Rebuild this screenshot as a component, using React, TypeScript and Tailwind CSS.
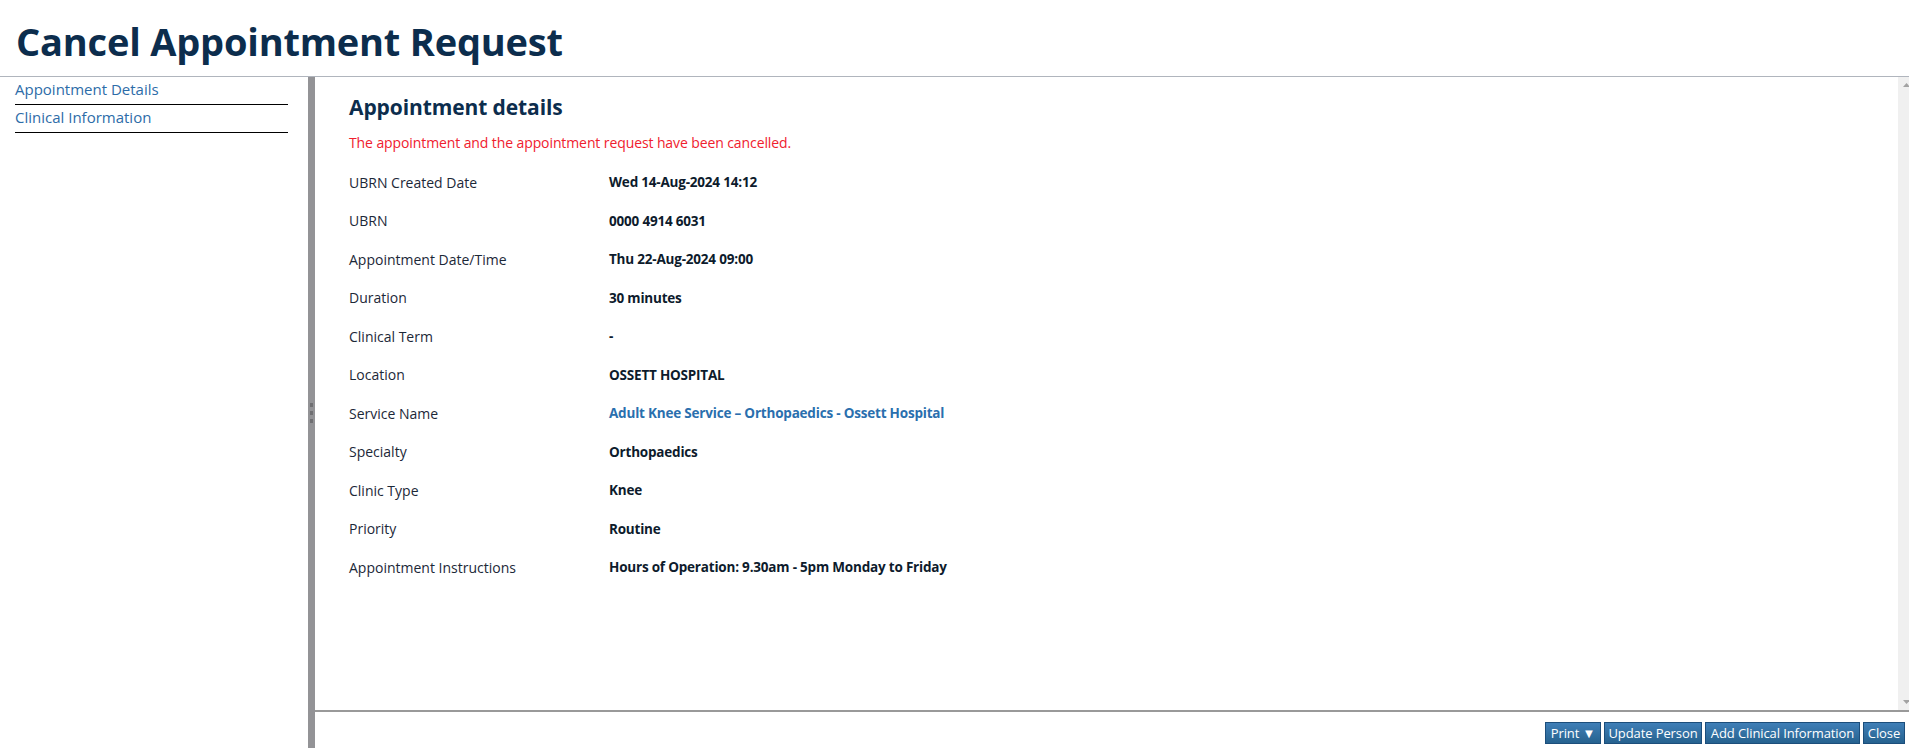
import React from 'react';

const rows: { label: string; value: string; link?: boolean }[] = [
  { label: 'UBRN Created Date', value: 'Wed 14-Aug-2024 14:12' },
  { label: 'UBRN', value: '0000 4914 6031' },
  { label: 'Appointment Date/Time', value: 'Thu 22-Aug-2024 09:00' },
  { label: 'Duration', value: '30 minutes' },
  { label: 'Clinical Term', value: '-' },
  { label: 'Location', value: 'OSSETT HOSPITAL' },
  { label: 'Service Name', value: 'Adult Knee Service \u2013 Orthopaedics - Ossett Hospital', link: true },
  { label: 'Specialty', value: 'Orthopaedics' },
  { label: 'Clinic Type', value: 'Knee' },
  { label: 'Priority', value: 'Routine' },
  { label: 'Appointment Instructions', value: 'Hours of Operation: 9.30am - 5pm Monday to Friday' },
];

const ActionButton: React.FC<{ className: string; children: React.ReactNode }> = ({ className, children }) => (
  <button
    className={`h-[22px] flex items-center justify-center border border-[#1c4e7b] bg-gradient-to-b from-[#3f7fb7] to-[#26628f] text-white text-[13px] leading-[20px] whitespace-nowrap tracking-[-0.1px] ${className}`}
  >
    {children}
  </button>
);

export default function App() {
  return (
    <div
      className="h-[748px] w-full flex flex-col bg-white overflow-hidden"
      style={{ fontFamily: '"Open Sans", "Noto Sans", sans-serif' }}
    >
      <header className="h-[77px] shrink-0 border-b border-[#b0b5bd] pl-[16px] pt-[17px]">
        <h1 className="text-[38px] leading-[48px] font-bold text-[#0c2d4d] tracking-[-0.2px]">
          Cancel Appointment Request
        </h1>
      </header>

      <div className="flex flex-1 min-h-0">
        <nav className="w-[308px] shrink-0 pl-[15px]">
          <ul className="w-[273px]">
            <li className="h-[28px] border-b border-black text-[15px] leading-[25px] text-[#2d6ca8]">
              Appointment Details
            </li>
            <li className="h-[28px] border-b border-black text-[15px] leading-[25px] text-[#2d6ca8]">
              Clinical Information
            </li>
          </ul>
        </nav>

        <div className="w-[7px] shrink-0 bg-[#939396] flex flex-col items-center justify-center gap-[4px]">
          <span className="w-[3px] h-[4px] bg-[#6f6f72]" />
          <span className="w-[3px] h-[4px] bg-[#6f6f72]" />
          <span className="w-[3px] h-[4px] bg-[#6f6f72]" />
        </div>

        <main className="flex-1 flex flex-col min-w-0">
          <div className="flex-1 flex min-h-0">
            <section className="flex-1 pl-[34px] pt-[15px]">
              <h2 className="text-[21px] leading-[30px] font-bold text-[#0c2d4d] tracking-[-0.1px]">
                Appointment details
              </h2>
              <p className="mt-[11px] text-[14px] leading-[20px] text-[#f0202e] tracking-[-0.1px]">
                The appointment and the appointment request have been cancelled.
              </p>
              <dl className="mt-[10px]">
                {rows.map((r) => (
                  <div key={r.label} className="flex h-[38.5px] items-center text-[14px]">
                    <dt className="w-[260px] shrink-0 text-[#1c2838]">{r.label}</dt>
                    <dd
                      className={
                        r.link
                          ? 'font-bold text-[13.5px] tracking-[-0.2px] text-[#2a6fae]'
                          : 'font-bold text-[13.5px] tracking-[-0.2px] text-[#0d1b2c]'
                      }
                    >
                      {r.value}
                    </dd>
                  </div>
                ))}
              </dl>
            </section>
            <div className="w-[11px] shrink-0 overflow-hidden bg-[#f0f0f0]">
              <div className="w-[17px] h-full flex flex-col justify-between items-center py-[6px]">
                <svg width="7" height="4" viewBox="0 0 7 4">
                  <path d="M0 4 L3.5 0 L7 4 Z" fill="#a3a3a3" />
                </svg>
                <svg width="7" height="4" viewBox="0 0 7 4">
                  <path d="M0 0 L3.5 4 L7 0 Z" fill="#a3a3a3" />
                </svg>
              </div>
            </div>
          </div>
          <div className="h-[38px] shrink-0 border-t-2 border-[#999999] flex justify-end items-start gap-[3px] pt-[10px] pr-[4px]">
            <ActionButton className="w-[56px]">Print &#9660;</ActionButton>
            <ActionButton className="w-[98px]">Update Person</ActionButton>
            <ActionButton className="w-[155px]">Add Clinical Information</ActionButton>
            <ActionButton className="w-[42px]">Close</ActionButton>
          </div>
        </main>
      </div>
    </div>
  );
}
